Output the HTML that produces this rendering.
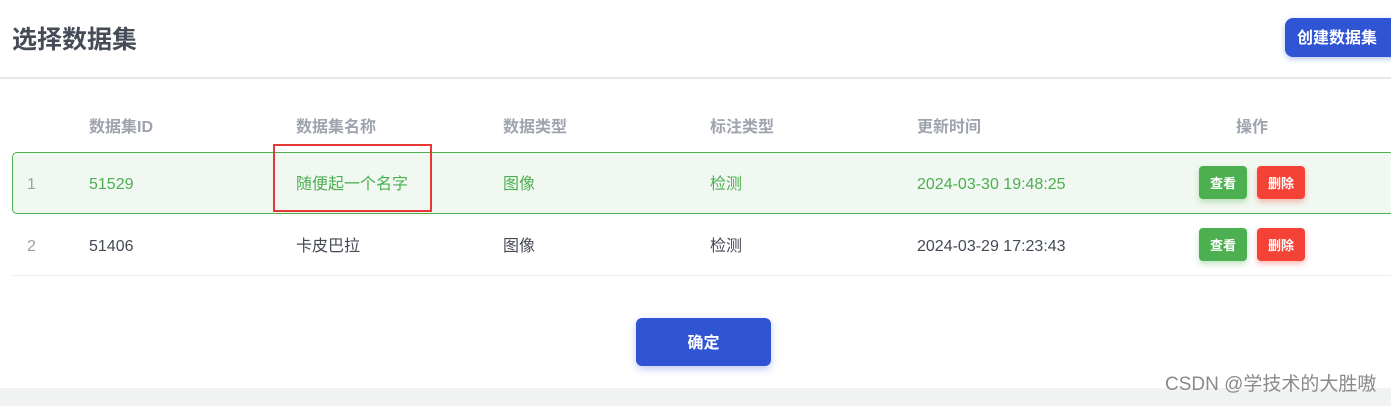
<!DOCTYPE html>
<html><head><meta charset="utf-8"><style>
*{margin:0;padding:0;box-sizing:border-box}
body{width:1391px;height:406px;overflow:hidden;background:#fff;font-family:"Liberation Sans","Noto Sans CJK SC",sans-serif;position:relative}
.a{position:absolute;white-space:nowrap}
.title{left:12px;top:24px;font-size:25px;font-weight:bold;color:#464c57;line-height:32px}
.create{left:1285px;top:18px;width:120px;height:39px;background:#2f55d4;border-radius:8px;color:#fff;font-weight:bold;font-size:16px;line-height:41px;padding-left:12px;box-shadow:0 2px 6px rgba(47,85,212,.35)}
.hr{left:0;top:77px;width:1391px;height:2px;background:#e6e6e6}
.th{top:118px;font-size:16px;font-weight:bold;color:#9ea3ad;line-height:20px}
.row1{left:12px;top:152px;width:1390px;height:62px;background:#f1f8f1;border:1px solid #4caf50;border-radius:5px}
.row2line{left:12px;top:275px;width:1379px;height:1px;background:#eeeeee}
.td{font-size:16px;line-height:20px}
.g{color:#4caf50}.d{color:#444a55}.n{color:#9aa0ab}
.btn{width:48px;height:33px;border-radius:4px;color:#fff;font-size:13px;font-weight:bold;line-height:35px;text-align:center}
.bg{background:#4caf50;box-shadow:0 3px 6px rgba(76,175,80,.35)}
.br{background:#f44336;box-shadow:0 3px 6px rgba(244,67,54,.35)}
.red{left:273px;top:144px;width:159px;height:68px;border:2px solid #e53935}
.ok{left:636px;top:318px;width:135px;height:48px;background:#2f55d4;border-radius:6px;color:#fff;font-size:16px;font-weight:bold;line-height:52px;text-align:center;box-shadow:0 3px 8px rgba(47,85,212,.3)}
.foot{left:0;top:388px;width:1391px;height:18px;background:#f1f2f2}
.wm{left:1165px;top:374px;font-size:19px;color:#8a8a8a;line-height:22px}
</style></head><body>
<div class="a title">选择数据集</div>
<div class="a create">创建数据集</div>
<div class="a hr"></div>
<div class="a th" style="left:89px">数据集ID</div>
<div class="a th" style="left:296px">数据集名称</div>
<div class="a th" style="left:503px">数据类型</div>
<div class="a th" style="left:710px">标注类型</div>
<div class="a th" style="left:917px">更新时间</div>
<div class="a th" style="left:1236px">操作</div>
<div class="a row1"></div>
<div class="a td n" style="left:27px;top:175px">1</div>
<div class="a td g" style="left:89px;top:175px">51529</div>
<div class="a td g" style="left:296px;top:175px">随便起一个名字</div>
<div class="a td g" style="left:503px;top:175px">图像</div>
<div class="a td g" style="left:710px;top:175px">检测</div>
<div class="a td g" style="left:917px;top:175px">2024-03-30 19:48:25</div>
<div class="a btn bg" style="left:1199px;top:166px">查看</div>
<div class="a btn br" style="left:1257px;top:166px">删除</div>
<div class="a td n" style="left:27px;top:237px">2</div>
<div class="a td d" style="left:89px;top:237px">51406</div>
<div class="a td d" style="left:296px;top:237px">卡皮巴拉</div>
<div class="a td d" style="left:503px;top:237px">图像</div>
<div class="a td d" style="left:710px;top:237px">检测</div>
<div class="a td d" style="left:917px;top:237px">2024-03-29 17:23:43</div>
<div class="a btn bg" style="left:1199px;top:228px">查看</div>
<div class="a btn br" style="left:1257px;top:228px">删除</div>
<div class="a row2line"></div>
<div class="a red"></div>
<div class="a ok">确定</div>
<div class="a foot"></div>
<div class="a wm">CSDN @学技术的大胜嗷</div>
</body></html>
